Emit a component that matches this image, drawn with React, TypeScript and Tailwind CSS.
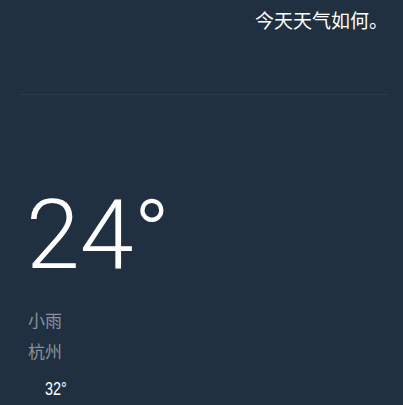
export default function App() {
  return (
    <div className="w-[403px] h-[405px] bg-[#203040] overflow-hidden font-['Liberation_Sans','Noto_Sans_CJK_SC',sans-serif]">
      <div className="flex justify-end pr-[15px] pt-[9px] h-[44px]">
        <span className="text-[19px] leading-[26px] text-white">今天天气如何。</span>
      </div>
      <div className="ml-[19px] mr-[14px] mt-[50px] h-[1px] bg-[#2a3a4b]" />
      <div className="pl-[26px] pt-[90px]">
        <div className="font-['Roboto',sans-serif] font-light text-[97px] leading-[100px] text-white">24°</div>
        <div className="pl-[2px] mt-[21px] text-[17px] leading-[31px] text-[#88929c]">小雨</div>
        <div className="pl-[2px] text-[17px] leading-[31px] text-[#88929c]">杭州</div>
        <div className="pl-[19px] pt-[11px] text-[18px] leading-[20px] text-white">
          <span className="inline-block origin-left scale-x-[0.8]">32°</span>
        </div>
      </div>
    </div>
  );
}
